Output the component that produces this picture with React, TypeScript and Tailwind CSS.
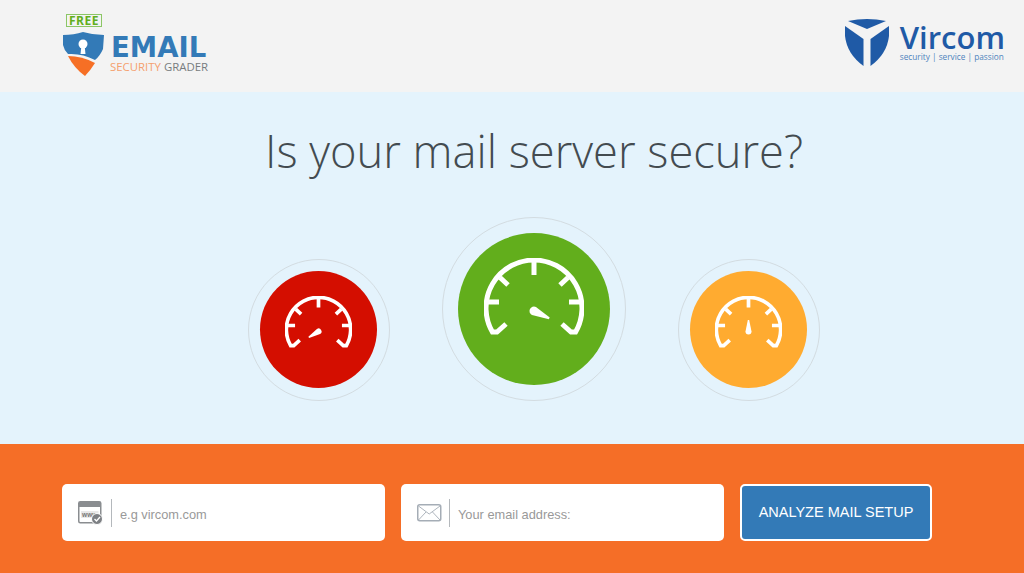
function Gauge({ size, angle, stroke }: { size: number; angle: number; stroke: number }) {
  return (
    <svg width={size} height={size} viewBox="0 0 100 100" fill="none" className="block">
      <g stroke="#fff" strokeWidth={stroke}>
        <path d="M22 66 L13 74 H8.4 A48 48 0 1 1 91.6 74 H87 L78 66" />
        <path d="M50 2 V17 M3 44 H15 M85 44 H97 M16 19.5 L24 27 M84 19.5 L76 27" />
      </g>
      <path d="M45.5 53 A4.5 4.5 0 1 0 54.5 53 L51 36 H49 Z" fill="#fff" transform={`rotate(${angle} 50 53)`} />
    </svg>
  )
}

function Dial({ big, color, angle }: { big?: boolean; color: string; angle: number }) {
  return (
    <div
      className={`flex items-center justify-center rounded-full border border-[#d3dce1] ${big ? 'w-[184px] h-[184px]' : 'w-[142px] h-[142px]'}`}
    >
      <div
        className={`flex items-center justify-center rounded-full ${color} ${big ? 'w-[152px] h-[152px] pb-[3px]' : 'w-[117px] h-[117px] mr-[1px] mb-[1px]'}`}
      >
        <Gauge size={big ? 100 : 67} angle={angle} stroke={big ? 5 : 5.5} />
      </div>
    </div>
  )
}

function WwwIcon() {
  return (
    <svg width="25" height="24" viewBox="0 0 25 24" fill="none" className="shrink-0">
      <rect x="0.75" y="0.75" width="22" height="21" rx="1.5" stroke="#8a8d90" strokeWidth="1.5" />
      <path d="M1 1 H23 V6 H1 Z" fill="#8a8d90" />
      <rect x="3" y="10" width="17.5" height="7" fill="#e9e9e9" />
      <text x="11.7" y="16" textAnchor="middle" fontSize="6.5" fontWeight="700" fontFamily="Liberation Sans, sans-serif" fill="#777">
        www
      </text>
      <circle cx="19" cy="18" r="5.5" fill="#7d8084" stroke="#fff" strokeWidth="1" />
      <path d="M16.5 18 L18.5 20 L22 16" stroke="#fff" strokeWidth="1.3" />
    </svg>
  )
}

function MailIcon() {
  return (
    <svg width="25" height="18" viewBox="0 0 25 18" fill="none" className="shrink-0">
      <rect x="0.75" y="0.75" width="23" height="16" rx="2" stroke="#a5adb6" strokeWidth="1.5" />
      <path d="M1.5 2 L12.2 10 L23 2 M1.5 16 L9 8 M23 16 L15.5 8" stroke="#a5adb6" strokeWidth="0.9" />
    </svg>
  )
}

function Field({ icon, placeholder, tight }: { icon: React.ReactNode; placeholder: string; tight?: boolean }) {
  return (
    <div className="flex items-center w-[323px] h-[57px] rounded-[5px] bg-white pl-[16px]">
      <div className="w-[25px] flex justify-center">{icon}</div>
      <div className={`w-px h-[28px] bg-[#b4b8bc] mr-[8px] ${tight ? 'ml-[7px]' : 'ml-[8px]'}`} />
      <input
        placeholder={placeholder}
        className="flex-1 min-w-0 bg-transparent outline-none pt-[4px] text-[12.8px] font-['Liberation_Sans',sans-serif] placeholder:text-[#999]"
      />
    </div>
  )
}

export default function App() {
  return (
    <div className="w-full h-[573px] flex flex-col overflow-hidden">
      <header className="h-[92px] bg-[#f3f3f3] flex justify-between pl-[62px] pr-[19px]">
        <div className="flex gap-[3px] pt-[14px]">
          <div className="w-[44px]">
            <div className="w-[36px] h-[13px] ml-[4px] border-[1.5px] border-[#8cc665] flex items-center justify-center text-[12px] font-bold leading-none tracking-[0.5px] text-[#62ae1c] font-['Open_Sans',sans-serif]">
              FREE
            </div>
            <svg width="44" height="46" viewBox="0 0 44 46" className="mt-[3px]">
              <path d="M1 5 Q12 5 21 2 Q31 5 42 5 L41 19 Q38 26 33 30 Q20 23 6 24 Q2 20 1 15 Z" fill="#337ab7" />
              <path d="M6 26 Q20 26 33 33 Q28 41 23 46 Q12 38 6 26 Z" fill="#f66f25" />
              <circle cx="21" cy="14" r="4.5" fill="#fff" />
              <path d="M19.5 15 H22.5 L23.5 24 H18.5 Z" fill="#fff" />
            </svg>
          </div>
          <div className="pt-[20px] flex flex-col">
            <span className="text-[27.5px] leading-[27px] font-bold text-[#337ab7] font-['DejaVu_Sans',sans-serif] ml-[2px]">EMAIL</span>
            <span className="text-[11.4px] leading-[11px] ml-[1px] font-['Open_Sans',sans-serif] whitespace-nowrap">
              <span className="text-[#f5a06e]">SECURITY</span> <span className="text-[#777c80]">GRADER</span>
            </span>
          </div>
        </div>
        <div className="flex gap-[11px] pt-[18px]">
          <svg width="44" height="49" viewBox="0 0 44 49" fill="#1f5aa6">
            <path d="M3 3 Q22 -1 41 3 L22 11 Z" />
            <path d="M0 8 L18.5 21 V48 Q2 36 0 18 Z" />
            <path d="M44 8 L25.5 21 V48 Q42 36 44 18 Z" />
          </svg>
          <div className="flex flex-col pt-[3px]">
            <span className="text-[31px] leading-[32px] font-['Open_Sans',sans-serif] font-semibold text-[#1f5aa6]">Vircom</span>
            <span className="text-[8.25px] leading-[12px] font-medium font-['Open_Sans',sans-serif] text-[#4f84bd] whitespace-pre mt-[-2px]">
              security | service | passion
            </span>
          </div>
        </div>
      </header>

      <main className="h-[352px] bg-[#e4f3fc] flex flex-col items-center pl-[44px] pt-[25px]">
        <h1 className="text-[45.25px] leading-[68px] font-light text-[#434b50] font-['Open_Sans',sans-serif] whitespace-nowrap">
          Is your mail server secure?
        </h1>
        <div className="flex items-end gap-[52px] mt-[32px]">
          <Dial color="bg-[#d40e00]" angle={-121} />
          <Dial big color="bg-[#62ae1c]" angle={116} />
          <Dial color="bg-[#ffab30]" angle={0} />
        </div>
      </main>

      <footer className="flex-1 bg-[#f56e27] flex gap-[16px] pl-[62px] pt-[40px] items-start">
        <Field icon={<WwwIcon />} placeholder="e.g vircom.com" />
        <Field icon={<MailIcon />} placeholder="Your email address:" tight />
        <button className="w-[192px] h-[57px] rounded-[5px] border-2 border-white bg-[#337ab7] pt-[1px] text-white text-[14.5px] font-['Liberation_Sans',sans-serif]">
          ANALYZE MAIL SETUP
        </button>
      </footer>
    </div>
  )
}
